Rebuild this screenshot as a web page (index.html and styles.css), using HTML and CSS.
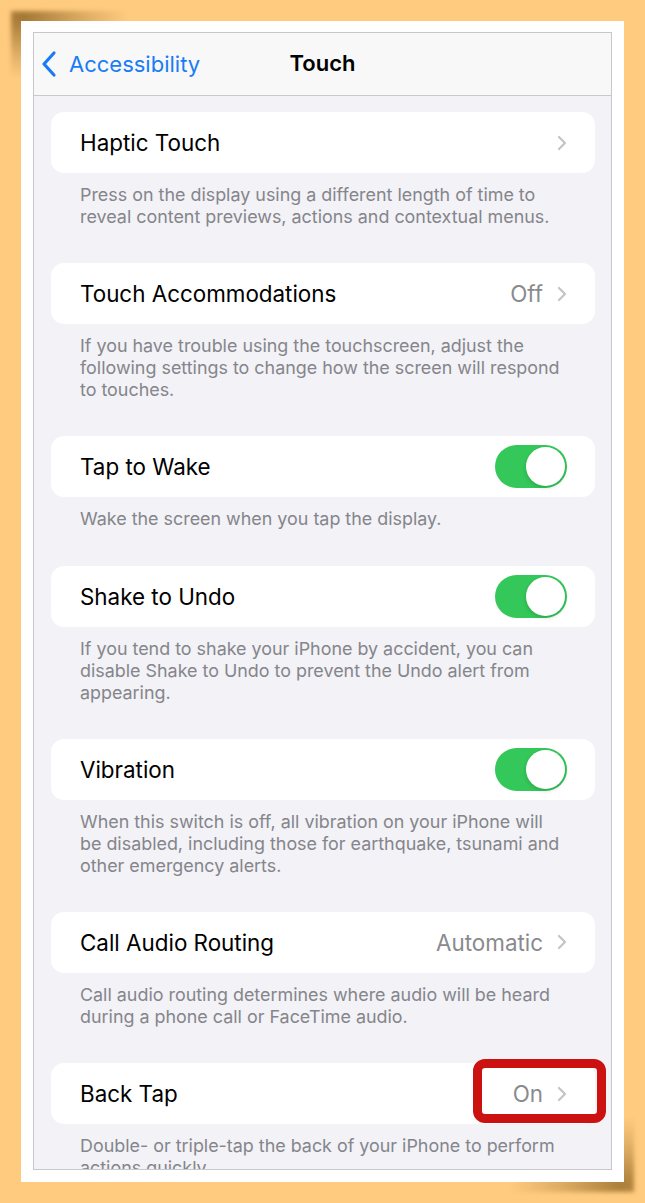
FILE: index.html
```html
<!DOCTYPE html>
<html>
<head>
<meta charset="utf-8">
<link rel="stylesheet" href="styles.css">
</head>
<body>
<div class="frame">
  <div class="screen">
    <div class="nav">
      <div class="back">
        <svg class="back-chev" viewBox="0 0 16 28" width="16" height="28"><path d="M13 3 L3 14 L13 25" fill="none" stroke="#1a7cf5" stroke-width="3.2" stroke-linecap="round" stroke-linejoin="round"/></svg>
        <span>Accessibility</span>
      </div>
      <div class="title">Touch</div>
    </div>
    <div class="content">
      <div class="group">
        <div class="card"><span class="label">Haptic Touch</span><span class="right"><svg class="chev" viewBox="0 0 10 16" width="10" height="16"><path d="M2 2 L8 8 L2 14" fill="none" stroke="#c4c4c7" stroke-width="2.2" stroke-linecap="round" stroke-linejoin="round"/></svg></span></div>
        <p class="foot">Press on the display using a different length of time to reveal content previews, actions and contextual menus.</p>
      </div>
      <div class="group">
        <div class="card"><span class="label">Touch Accommodations</span><span class="right"><span class="value">Off</span><svg class="chev" viewBox="0 0 10 16" width="10" height="16"><path d="M2 2 L8 8 L2 14" fill="none" stroke="#c4c4c7" stroke-width="2.2" stroke-linecap="round" stroke-linejoin="round"/></svg></span></div>
        <p class="foot">If you have trouble using the touchscreen, adjust the following settings to change how the screen will respond to touches.</p>
      </div>
      <div class="group">
        <div class="card"><span class="label">Tap to Wake</span><span class="toggle"><span class="knob"></span></span></div>
        <p class="foot">Wake the screen when you tap the display.</p>
      </div>
      <div class="group">
        <div class="card"><span class="label">Shake to Undo</span><span class="toggle"><span class="knob"></span></span></div>
        <p class="foot">If you tend to shake your iPhone by accident, you can disable Shake to Undo to prevent the Undo alert from appearing.</p>
      </div>
      <div class="group">
        <div class="card"><span class="label">Vibration</span><span class="toggle"><span class="knob"></span></span></div>
        <p class="foot">When this switch is off, all vibration on your iPhone will be disabled, including those for earthquake, tsunami and other emergency alerts.</p>
      </div>
      <div class="group">
        <div class="card"><span class="label">Call Audio Routing</span><span class="right"><span class="value">Automatic</span><svg class="chev" viewBox="0 0 10 16" width="10" height="16"><path d="M2 2 L8 8 L2 14" fill="none" stroke="#c4c4c7" stroke-width="2.2" stroke-linecap="round" stroke-linejoin="round"/></svg></span></div>
        <p class="foot">Call audio routing determines where audio will be heard during a phone call or FaceTime audio.</p>
      </div>
      <div class="group">
        <div class="card"><span class="label">Back Tap</span><span class="right"><span class="value">On</span><svg class="chev" viewBox="0 0 10 16" width="10" height="16"><path d="M2 2 L8 8 L2 14" fill="none" stroke="#c4c4c7" stroke-width="2.2" stroke-linecap="round" stroke-linejoin="round"/></svg></span><span class="highlight"></span></div>
        <p class="foot">Double- or triple-tap the back of your iPhone to perform actions quickly.</p>
      </div>
    </div>
  </div>
</div>
</body>
</html>
```
FILE: styles.css
```css
* { box-sizing: border-box; }
html, body { margin: 0; padding: 0; }
body {
  background: #ffcb7f;
  width: 645px;
  height: 1203px;
  overflow: hidden;
  font-family: "Inter", "Liberation Sans", sans-serif;
  padding: 21px 0 0 21px;
}
.frame {
  position: relative;
  width: 603px;
  height: 1161px;
  background: #fff;
  padding: 11px 12px 12px 12px;
}
.frame::before {
  content: "";
  position: absolute;
  left: -10px;
  top: -10px;
  width: 140px;
  height: 80px;
  background: radial-gradient(ellipse 100% 100% at 8% 8%, rgba(100, 62, 0, 0.6) 0%, rgba(100, 62, 0, 0.25) 40%, rgba(100, 62, 0, 0) 75%);
  filter: blur(2px);
  z-index: -1;
}
.frame::after {
  content: "";
  position: absolute;
  right: -10px;
  bottom: -10px;
  width: 150px;
  height: 90px;
  background: radial-gradient(ellipse 100% 100% at 92% 92%, rgba(100, 62, 0, 0.55) 0%, rgba(100, 62, 0, 0.22) 40%, rgba(100, 62, 0, 0) 75%);
  filter: blur(2px);
  z-index: -1;
}
.screen {
  height: 100%;
  border: 1px solid #c8c8cc;
  background: #f2f2f7;
  overflow: hidden;
}
.nav {
  height: 63px;
  background: #f8f8f9;
  border-bottom: 1px solid #c9c9cc;
  display: flex;
  align-items: center;
  position: relative;
  padding-left: 7px;
}
.back {
  display: flex;
  align-items: center;
  gap: 12px;
  color: #1a7cf5;
  font-size: 22px;
}
.title {
  position: absolute;
  left: 0;
  right: 0;
  text-align: center;
  font-weight: 600;
  font-size: 22px;
  color: #000;
  pointer-events: none;
  top: 17px;
}
.content {
  padding: 16px 16px 0 17px;
}
.card {
  height: 61px;
  background: #fff;
  border-radius: 13px;
  display: flex;
  align-items: center;
  justify-content: space-between;
  padding: 0 28px 0 29px;
  position: relative;
}
.label {
  font-size: 22.4px;
  color: #000;
}
.right {
  display: flex;
  align-items: center;
  gap: 14px;
}
.value {
  font-size: 22.4px;
  color: #8a8a8e;
}
.chev { display: block; }
.foot {
  margin: 0 0 35.2px 0;
  padding: 11px 28px 0 29px;
  font-size: 17.9px;
  line-height: 22px;
  color: #85858b;
}
.toggle {
  width: 72px;
  height: 43px;
  border-radius: 22px;
  background: #34c759;
  display: flex;
  align-items: center;
  justify-content: flex-end;
  padding-right: 2px;
}
.knob {
  width: 39px;
  height: 39px;
  border-radius: 50%;
  background: #fff;
  box-shadow: 0 2px 4px rgba(0,0,0,0.15);
}
.highlight {
  position: absolute;
  left: 422px;
  top: -4px;
  width: 133px;
  height: 64px;
  border: 9px solid #cc1111;
  border-radius: 12px;
}
```
